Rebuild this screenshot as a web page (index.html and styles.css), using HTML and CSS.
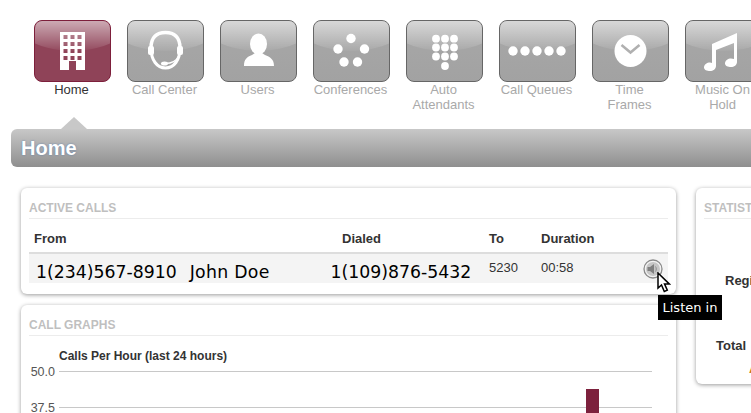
FILE: index.html
```html
<!DOCTYPE html>
<html lang="en">
<head>
<meta charset="utf-8">
<title>Home</title>
<link rel="stylesheet" href="styles.css">
</head>
<body>
<nav class="nav">
  <a class="nav-item active"><span class="tile"><svg viewBox="0 0 77 62"><path fill="#fff" fill-rule="evenodd" d="M26 12h25v38H42v-9h-7v9h-9zM29.500 15v4h4v-4zM36.500 15v4h4v-4zM43.500 15v4h4v-4zM29.500 22v4h4v-4zM36.500 22v4h4v-4zM43.500 22v4h4v-4zM29.500 29v4h4v-4zM36.500 29v4h4v-4zM43.500 29v4h4v-4zM29.500 36v4h4v-4zM36.500 36v4h4v-4zM43.500 36v4h4v-4z"/></svg></span><span class="label">Home</span></a>
  <a class="nav-item"><span class="tile"><svg viewBox="0 0 77 62"><path fill="none" stroke="#fff" stroke-width="3.500" d="M24 28c0-11 6-15.500 14.500-15.500S53 17 53 28"/><path fill="none" stroke="#fff" stroke-width="3" d="M24 28c0 12 6 20 14.500 20S53 40 53 28"/><rect x="21" y="26" width="6" height="9" rx="2" fill="#fff"/><rect x="50" y="26" width="6" height="9" rx="2" fill="#fff"/><path fill="none" stroke="#fff" stroke-width="1.500" d="M38 43.500c5 0 11-1 14-8"/><ellipse cx="37.500" cy="43.500" rx="3.500" ry="2" fill="#fff"/></svg></span><span class="label">Call Center</span></a>
  <a class="nav-item"><span class="tile"><svg viewBox="0 0 77 62"><ellipse cx="38.500" cy="24" rx="8.500" ry="10.500" fill="#fff"/><path fill="#fff" d="M24 46c0-7 3-9 8-11l3-2h7l3 2c5 2 9 4 9 11z"/></svg></span><span class="label">Users</span></a>
  <a class="nav-item"><span class="tile"><svg viewBox="0 0 77 62" fill="#fff"><circle cx="38" cy="18.500" r="4.700"/><circle cx="25" cy="29" r="4.700"/><circle cx="51.500" cy="29" r="4.700"/><circle cx="31" cy="42" r="4.700"/><circle cx="44.500" cy="42" r="4.700"/></svg></span><span class="label">Conferences</span></a>
  <a class="nav-item"><span class="tile"><svg viewBox="0 0 77 62" fill="#fff"><circle cx="30" cy="18.700" r="3.900"/><circle cx="39" cy="18.700" r="3.900"/><circle cx="48" cy="18.700" r="3.900"/><circle cx="30" cy="27.500" r="3.900"/><circle cx="39" cy="27.500" r="3.900"/><circle cx="48" cy="27.500" r="3.900"/><circle cx="30" cy="36.500" r="3.900"/><circle cx="39" cy="36.500" r="3.900"/><circle cx="48" cy="36.500" r="3.900"/><circle cx="39" cy="46" r="3.900"/></svg></span><span class="label">Auto<br>Attendants</span></a>
  <a class="nav-item"><span class="tile"><svg viewBox="0 0 77 62" fill="#fff"><circle cx="14" cy="31" r="4.700"/><circle cx="26" cy="31" r="4.700"/><circle cx="38" cy="31" r="4.700"/><circle cx="50" cy="31" r="4.700"/><circle cx="62" cy="31" r="4.700"/></svg></span><span class="label">Call Queues</span></a>
  <a class="nav-item"><span class="tile"><svg viewBox="0 0 77 62"><circle cx="38.500" cy="31" r="16" fill="#fff"/><path fill="none" stroke="#b0b0b0" stroke-width="2.500" d="M29.500 25l9 7.500 9-7.500"/></svg></span><span class="label">Time<br>Frames</span></a>
  <a class="nav-item"><span class="tile"><svg viewBox="0 0 77 62"><path fill="#fff" d="M27 24L52 13v29c0 3-3 5-6 5s-6-1-6-3.500c0-3 3-5 6-5 1 0 2 .2 3 .5V23L31 30v16c0 3-3 5-6 5s-6-1-6-3.500c0-3 3-5 6-5 1 0 1.500.2 2 .5z"/></svg></span><span class="label">Music On<br>Hold</span></a>
</nav>
<header class="bar"><h1>Home</h1></header>
<main class="content">
  <div class="col-left">
    <section class="card">
      <h2>ACTIVE CALLS</h2>
      <div class="calls-head">
        <span class="c-from">From</span><span class="c-dialed">Dialed</span><span class="c-to">To</span><span class="c-dur">Duration</span>
      </div>
      <div class="calls-row">
        <span class="c-from big">1(234)567-8910<span class="caller">John Doe</span></span>
        <span class="c-dialed big">1(109)876-5432</span>
        <span class="c-to">5230</span>
        <span class="c-dur">00:58</span>
        <span class="listen">
          <svg viewBox="0 0 20 20" width="20" height="20"><circle cx="10" cy="10" r="9" fill="#f2f2f2" stroke="#8a8a8a" stroke-width="1.300"/><circle cx="10" cy="10" r="7" fill="#c6c6c6"/><path fill="#7f7f7f" d="M4.500 8h2.500l4-3v10l-4-3H4.500z"/><path fill="none" stroke="#8c8c8c" d="M12.500 7.500c1 1.500 1 3.500 0 5"/></svg>
        </span>
      </div>
    </section>
    <section class="card card-graph">
      <h2>CALL GRAPHS</h2>
      <h3>Calls Per Hour (last 24 hours)</h3>
      <div class="chart">
        <div class="tick"><span>50.0</span><i></i></div>
        <div class="tick"><span>37.5</span><i></i></div>
        <b class="chart-bar"></b>
      </div>
    </section>
  </div>
  <aside class="card card-stats">
    <h2>STATISTICS</h2>
    <div class="stat s1">Registered</div>
    <div class="stat s2">Total</div>
    <div class="stat s3">A</div>
  </aside>
</main>
<svg class="cursor" viewBox="0 0 14 22" width="14" height="22"><path fill="#fff" stroke="#000" stroke-width="1.500" d="M1 1v15l3.500-3 2.800 6.500 3-1.300-2.800-6.300h4.700z"/></svg>
<div class="tooltip">Listen in</div>
</body>
</html>
```
FILE: styles.css
```css
html, body { margin: 0; height: 413px; overflow: hidden; background: #fff; }
body { font-family: "Liberation Sans", Arial, sans-serif; font-size: 13px; color: #333; width: 751px; position: relative; }
.nav { display: flex; gap: 16px; padding: 20px 0 0 34px; width: 900px; height: 109px; }
.nav-item { width: 77px; flex: none; text-align: center; }
.tile { display: block; width: 77px; height: 62px; box-sizing: border-box; position: relative; border: 1px solid #666; border-radius: 8px; overflow: hidden; background: linear-gradient(#a8a8a8, #a2a2a2); }
.tile::before { content: ""; position: absolute; left: -30px; right: -30px; top: -60px; height: 90px; border-radius: 50%; background: linear-gradient(rgba(255,255,255,.62) 62%, rgba(255,255,255,.04)); }
.tile svg { position: absolute; left: -1px; top: -1px; width: 77px; height: 62px; }
.active .tile { border-color: #7d1f3b; background: #8f4358; }
.label { display: block; margin-right: 2px; font-size: 13px; line-height: 15px; color: #a9a9a9; white-space: nowrap; }
.active .label { color: #333; }
.bar { position: relative; margin-left: 11px; height: 38px; border-radius: 6px 0 0 6px; background: linear-gradient(#c8c8c8, #8f8f8f); }
.bar::before { content: ""; position: absolute; left: 50px; top: -12px; border: solid transparent; border-width: 0 13px 12px; border-bottom-color: #c8c8c8; }
.bar h1 { margin: 0; padding-left: 10px; font-size: 20px; line-height: 38px; color: #fff; text-shadow: 0 0 2px #5a7fb0; }
.content { display: flex; gap: 20px; padding: 21px 0 0 21px; align-items: flex-start; width: 900px; }
.col-left { width: 655px; flex: none; display: flex; flex-direction: column; gap: 11px; }
.card { background: #fff; border-radius: 6px; box-shadow: 0 1px 4px rgba(0,0,0,.4); padding: 0 8px; box-sizing: border-box; height: 106px; }
.card h2 { margin: 0; padding-top: 13px; font-size: 12px; line-height: 14px; height: 17px; color: #bfbfbf; border-bottom: 1px solid #ececec; }
.calls-head, .calls-row { display: flex; position: relative; }
.calls-head { height: 33px; line-height: 40px; font-weight: bold; border-bottom: 2px solid #ddd; }
.calls-row { height: 29px; background: #f4f4f4; line-height: 28px; }
.c-from { position: absolute; left: 5px; }
.calls-row .c-from { left: 7px; }
.c-dialed { position: absolute; left: 313px; }
.calls-row .c-dialed { left: 301.500px; }
.c-to { position: absolute; left: 460px; }
.c-dur { position: absolute; left: 512px; }
.calls-row .big { font-family: "DejaVu Sans", sans-serif; font-size: 17.300px; color: #000; line-height: 36px; }
.caller { margin-left: 13px; letter-spacing: .3px; }
.listen { position: absolute; left: 614px; top: 5px; width: 20px; height: 20px; }
.listen svg { display: block; }
.card-graph { height: 140px; overflow: hidden; border-radius: 6px 6px 0 0; }
.card-graph h3 { margin: 0; padding: 13px 0 0 30px; font-size: 12px; line-height: 14px; }
.chart { position: relative; }
.tick { display: flex; align-items: center; height: 14px; margin-top: 1px; margin-bottom: 22px; }
.tick span { width: 26px; margin-top: 2px; text-align: right; font-size: 12.500px; color: #555; padding-right: 4px; }
.tick i { display: block; width: 593px; height: 1px; background: #c8c8c8; }
.chart-bar { position: absolute; left: 557px; top: 25px; width: 13px; height: 40px; background: #7d213d; }
.card-stats { width: 200px; flex: none; height: 196px; }
.stat { position: absolute; font-weight: bold; white-space: nowrap; }
.s1 { left: 725px; top: 273px; }
.s2 { left: 716px; top: 338px; }
.s3 { left: 749px; top: 361px; color: #c87a1e; }
.cursor { position: absolute; left: 657px; top: 272px; }
.tooltip { position: absolute; left: 658px; top: 295px; width: 64px; height: 25px; background: #000; color: #fff; font-family: "DejaVu Sans", sans-serif; font-size: 13px; line-height: 25px; text-align: center; }
```
